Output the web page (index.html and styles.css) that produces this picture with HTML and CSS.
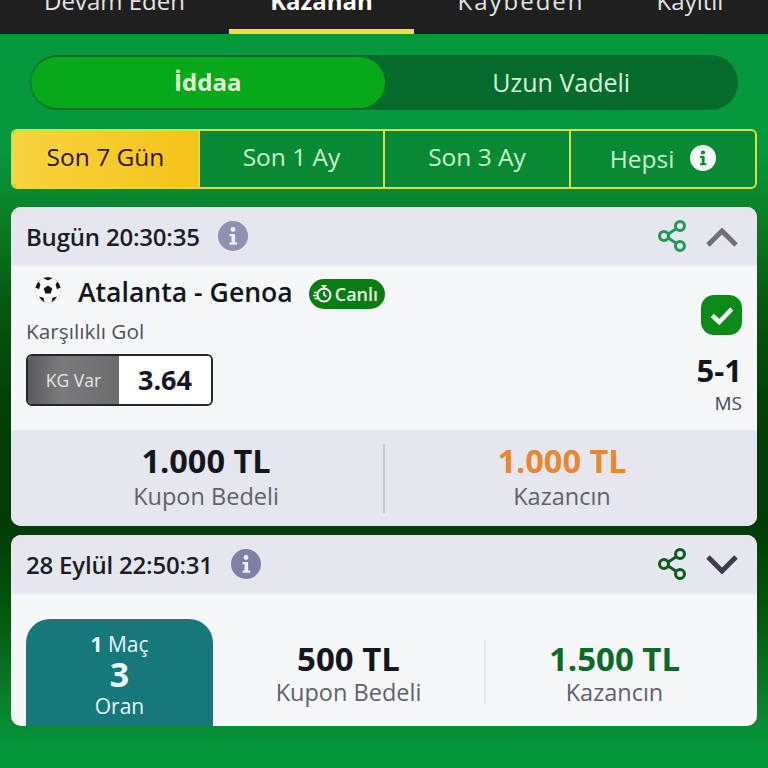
FILE: index.html
```html
<!DOCTYPE html>
<html lang="tr">
<head>
    <meta charset="utf-8" />
    <title>Kuponlarım</title>
    <link rel="stylesheet" href="styles.css">
</head>
<body>
<nav class="topnav">
    <a class="topnav-item">Devam Eden</a>
    <a class="topnav-item active">Kazanan</a>
    <a class="topnav-item wide">Kaybeden</a>
    <a class="topnav-item">Kayıtlı</a>
</nav>
<main class="page">
    <div class="toggle">
        <div class="toggle-item active">İddaa</div>
        <div class="toggle-item">Uzun Vadeli</div>
    </div>
    <div class="tabs">
        <div class="tab active">Son 7 Gün</div>
        <div class="tab">Son 1 Ay</div>
        <div class="tab">Son 3 Ay</div>
        <div class="tab">Hepsi
            <svg class="tab-info" viewBox="0 0 26 26"><circle cx="13" cy="13" r="13" fill="#f4fbf4"/><circle cx="13" cy="7.5" r="2.1" fill="#0a8a35"/><path d="M10 11h4.6v7.2H16.400v2h-6.400v-2h1.800v-5.200H10z" fill="#0a8a35"/></svg>
        </div>
    </div>

    <section class="card card-open">
        <header class="card-head">
            <span class="card-date">Bugün 20:30:35</span>
            <svg class="info" viewBox="0 0 30 30"><circle cx="15" cy="15" r="15" fill="#8f91b3"/><circle cx="15" cy="8.500" r="2.400" fill="#eceef3"/><path d="M11.500 13h5.600v8.500h2v2.300h-7.600v-2.300h2v-6.200h-2z" fill="#eceef3"/></svg>
            <svg class="share share-light" viewBox="0 0 30 32"><path d="M8 16 22 7M8 16l14 9" fill="none" stroke="currentColor" stroke-width="2.800"/><circle cx="7" cy="16" r="4.500" fill="#e6e7ee" stroke="currentColor" stroke-width="3"/><circle cx="23" cy="6" r="4.500" fill="#e6e7ee" stroke="currentColor" stroke-width="3"/><circle cx="23" cy="26" r="4.500" fill="#e6e7ee" stroke="currentColor" stroke-width="3"/></svg>
            <svg class="chevron chevron-up" viewBox="0 0 32 20"><path d="M2 17 16 3l14 14" fill="none" stroke="currentColor" stroke-width="5"/></svg>
        </header>
        <div class="match">
            <div class="match-left">
                <div class="match-title">
                    <svg class="ball" viewBox="0 0 28 28"><circle cx="14" cy="14" r="13" fill="#fff" stroke="#ddd" stroke-width="1"/><path d="M14 9.500l4.300 3.100-1.600 5h-5.400l-1.600-5z" fill="#151515"/><path d="M9.500 2.200 14 4.500l4.500-2.300A13 13 0 0 0 9.500 2.200zM1.500 11.500l3.500 1.800 1.500-5-2-2.500A13 13 0 0 0 1.500 11.500zM26.500 11.500l-3.500 1.800-1.500-5 2-2.500a13 13 0 0 1 3 5.700zM5 20.500l4.500 1.200 1 4.600A13 13 0 0 1 5 20.500zM23 20.500l-4.500 1.200-1 4.600A13 13 0 0 0 23 20.500z" fill="#151515"/></svg>
                    <span class="teams">Atalanta - Genoa</span>
                    <span class="live">
                        <svg class="live-icon" viewBox="0 0 20 20"><circle cx="11" cy="11" r="6.500" fill="none" stroke="#fff" stroke-width="2"/><path d="M8.500 1.800h5M11 2v2.500M11 7.500V11l2.500 1.500M1 8.500h4M0 11.500h4M1.500 14.500h4" fill="none" stroke="#fff" stroke-width="1.600"/></svg>
                        Canlı
                    </span>
                </div>
                <div class="market">Karşılıklı Gol</div>
                <div class="odd">
                    <span class="odd-name">KG Var</span>
                    <span class="odd-value">3.64</span>
                </div>
            </div>
            <div class="match-right">
                <span class="check"><svg viewBox="0 0 24 20"><path d="M3 10.500 9.500 16.500 21 4.500" fill="none" stroke="#f3fbf0" stroke-width="4.200"/></svg></span>
                <span class="score">5-1</span>
                <span class="score-label">MS</span>
            </div>
        </div>
        <footer class="totals">
            <div class="total">
                <strong class="amount">1.000 TL</strong>
                <span class="amount-label">Kupon Bedeli</span>
            </div>
            <div class="total">
                <strong class="amount amount-orange">1.000 TL</strong>
                <span class="amount-label">Kazancın</span>
            </div>
        </footer>
    </section>

    <section class="card card-closed">
        <header class="card-head">
            <span class="card-date">28 Eylül 22:50:31</span>
            <svg class="info" viewBox="0 0 30 30"><circle cx="15" cy="15" r="15" fill="#7f80a6"/><circle cx="15" cy="8.500" r="2.400" fill="#eceef3"/><path d="M11.500 13h5.600v8.500h2v2.300h-7.600v-2.300h2v-6.200h-2z" fill="#eceef3"/></svg>
            <svg class="share share-dark" viewBox="0 0 30 32"><path d="M8 16 22 7M8 16l14 9" fill="none" stroke="currentColor" stroke-width="2.800"/><circle cx="7" cy="16" r="4.500" fill="#e6e7ee" stroke="currentColor" stroke-width="3"/><circle cx="23" cy="6" r="4.500" fill="#e6e7ee" stroke="currentColor" stroke-width="3"/><circle cx="23" cy="26" r="4.500" fill="#e6e7ee" stroke="currentColor" stroke-width="3"/></svg>
            <svg class="chevron chevron-down" viewBox="0 0 32 20"><path d="M2 3l14 14L30 3" fill="none" stroke="currentColor" stroke-width="5"/></svg>
        </header>
        <div class="coupon">
            <div class="rate">
                <span class="rate-count"><b>1</b> Maç</span>
                <strong class="rate-value">3</strong>
                <span class="rate-label">Oran</span>
            </div>
            <div class="total">
                <strong class="amount">500 TL</strong>
                <span class="amount-label">Kupon Bedeli</span>
            </div>
            <div class="total total-line">
                <strong class="amount amount-green">1.500 TL</strong>
                <span class="amount-label">Kazancın</span>
            </div>
        </div>
    </section>
</main>
</body>
</html>
```

FILE: styles.css
```css
* {
    padding: 0;
    margin: 0;
    box-sizing: border-box;
    font-family: "Open Sans", "Noto Sans", sans-serif;
}
html, body {
    height: 768px;
    overflow: hidden;
}
body {
    background-color: #06963c;
    background-image: linear-gradient(to bottom, #06983d 150px, #0a8a30 190px, #0a7a20 230px, #055a10 300px, #024008 400px, #023d05 530px, #045a0c 620px, #0a8028 700px, #06963c 745px);
}
.topnav {
    display: grid;
    grid-template-columns: 229px 185px 214px 1fr;
    height: 34px;
    padding-right: 16px;
    background-color: #1f1f1f;
    overflow: hidden;
}
.topnav-item {
    display: block;
    height: 47px;
    margin-top: -13px;
    line-height: 28px;
    font-size: 24px;
    text-align: center;
    color: #e4e4e4;
}
.topnav-item.wide {
    letter-spacing: 2px;
}
.topnav-item.active {
    color: #fff;
    font-weight: 700;
    border-bottom: 5px solid #f5e03a;
}
.page {
    padding: 21px 11px 0;
}
.toggle {
    display: flex;
    height: 55px;
    margin: 0 19px 19px;
    padding: 2px 0 2px 1px;
    border-radius: 28px;
    background-color: #056b2c;
}
.toggle-item {
    flex: 1;
    line-height: 50px;
    font-size: 25px;
    text-align: center;
    color: #d8f5dc;
}
.toggle-item.active {
    border-radius: 26px;
    background-color: #07a81a;
    font-size: 24px;
    font-weight: 700;
    color: #e3f8d2;
}
.tabs {
    display: grid;
    grid-template-columns: 185px 185px 186px 1fr;
    height: 60px;
    margin-bottom: 18px;
    border: 2px solid #d9dd4a;
    border-radius: 6px;
    background-color: #088a35;
    overflow: hidden;
}
.tab {
    display: flex;
    align-items: center;
    justify-content: center;
    gap: 16px;
    padding-bottom: 5px;
    border-left: 2px solid #d9dd4a;
    font-size: 24.5px;
    color: #c9f2cd;
}
.tab:last-child {
    padding-bottom: 2px;
}
.tab.active {
    border-left: 0;
    background-image: linear-gradient(to right, #f8d340, #f5c318);
    color: #2a1406;
}
.tab-info {
    width: 26px;
    height: 26px;
}
.card {
    border-radius: 10px;
    background-color: #f6f7f9;
    overflow: hidden;
}
.card-open {
    height: 319px;
    margin-bottom: 9px;
}
.card-closed {
    height: 191px;
}
.card-head {
    display: flex;
    align-items: center;
    height: 60px;
    padding: 0 19px 0 15px;
    background-color: #e6e7ee;
    border-bottom: 2px solid #f0f1f4;
}
.card-date {
    font-size: 24px;
    font-weight: 600;
    color: #1b1d26;
    letter-spacing: -.2px;
}
.info {
    width: 30px;
    height: 30px;
    margin-left: 18px;
}
.share {
    width: 30px;
    height: 32px;
    margin-left: auto;
}
.share-light {
    color: #1c9a55;
}
.share-dark {
    color: #0b5c1c;
}
.chevron {
    width: 32px;
    height: 20px;
    margin-left: 19px;
}
.chevron-up {
    margin-top: 3px;
    color: #6e7078;
}
.chevron-down {
    color: #3a3d4c;
}
.match {
    display: flex;
    justify-content: space-between;
    height: 163px;
    padding: 0 15px;
}
.match-title {
    display: flex;
    align-items: center;
    height: 50px;
    padding-left: 8px;
}
.ball {
    width: 28px;
    height: 28px;
    margin-top: -4px;
}
.teams {
    margin-left: 16px;
    font-size: 26.6px;
    font-weight: 600;
    color: #14161e;
}
.live {
    display: flex;
    align-items: center;
    gap: 2px;
    height: 30px;
    margin-top: 4px;
    margin-left: 16px;
    padding: 0 7px 0 4px;
    border-radius: 15px;
    background-color: #0a7d12;
    font-size: 18px;
    font-weight: 600;
    color: #e8f6e6;
}
.live-icon {
    width: 20px;
    height: 20px;
}
.market {
    line-height: 28px;
    font-size: 20.8px;
    font-weight: 500;
    color: #50525a;
}
.odd {
    display: flex;
    width: 187px;
    height: 52px;
    margin-top: 9px;
    border: 2px solid #25272e;
    border-radius: 6px;
    overflow: hidden;
}
.odd-name {
    width: 91px;
    line-height: 48px;
    text-align: center;
    font-size: 17.5px;
    color: #e6e6e8;
    background-image: linear-gradient(to right, #5a5a5c, #7b7b7d 35%, #6c6c6e);
}
.odd-value {
    flex: 1;
    line-height: 48px;
    text-align: center;
    font-size: 27px;
    font-weight: 700;
    color: #141824;
    background-color: #fff;
}
.match-right {
    display: flex;
    flex-direction: column;
    align-items: flex-end;
}
.check {
    display: flex;
    align-items: center;
    justify-content: center;
    width: 41px;
    height: 40px;
    margin-top: 28px;
    border-radius: 13px;
    background-color: #0c8a17;
}
.check svg {
    width: 26px;
    height: 22px;
}
.score {
    margin-top: 17px;
    line-height: 36px;
    font-size: 31px;
    font-weight: 700;
    color: #14161e;
}
.score-label {
    line-height: 30px;
    font-size: 19px;
    font-weight: 500;
    color: #44465a;
}
.totals {
    display: grid;
    grid-template-columns: 372px 1fr;
    grid-template-rows: 69px;
    height: 97px;
    padding: 14px 0;
    background-color: #e6e7ee;
}
.total {
    display: flex;
    flex-direction: column;
    align-items: center;
    justify-content: center;
}
.totals .total {
    padding: 0 0 4px 18px;
}
.totals .total + .total {
    padding: 0 18px 4px 0;
    border-left: 2px solid #c9cad0;
}
.totals .amount-label {
    margin-top: 2px;
}
.amount {
    line-height: 36px;
    font-size: 32.5px;
    font-weight: 700;
    color: #14161e;
}
.amount-orange {
    color: #ea872c;
}
.amount-green {
    color: #0b6a25;
}
.amount-label {
    line-height: 30px;
    font-size: 23.5px;
    color: #5f6169;
}
.coupon {
    display: grid;
    grid-template-columns: 187px 271px 1fr;
    height: 131px;
    padding: 24px 0 0 15px;
}
.rate {
    display: flex;
    flex-direction: column;
    align-items: center;
    height: 130px;
    padding-top: 11px;
    border-radius: 24px 24px 0 0;
    background-color: #17787c;
    color: #e8f6f6;
}
.rate-count {
    line-height: 28px;
    font-size: 21px;
}
.rate-value {
    line-height: 32px;
    font-size: 34px;
}
.rate-label {
    line-height: 32px;
    font-size: 21px;
}
.coupon .total {
    height: 64px;
    margin-top: 21px;
    padding-top: 4px;
}
.coupon .amount {
    font-size: 33px;
}
.coupon .total-line {
    padding-right: 14px;
    border-left: 2px solid #e6e7ea;
}
```
